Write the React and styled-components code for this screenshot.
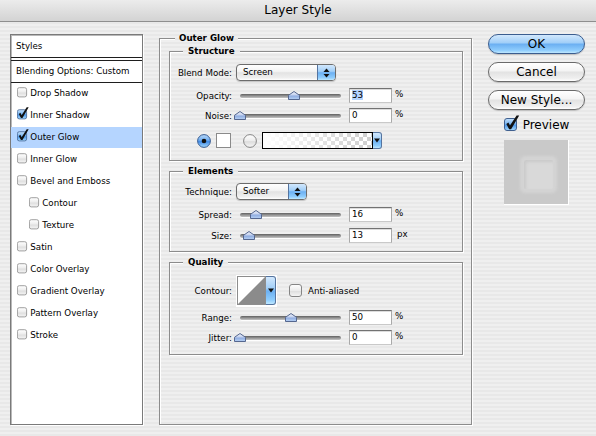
import React, { useId } from "react";
import styled, { createGlobalStyle } from "styled-components";

const FONT = `"DejaVu Sans", "Liberation Sans", sans-serif`;
const STRIPES = `repeating-linear-gradient(to bottom, #efefef 0px, #efefef 2px, #e8e8e8 2px, #e8e8e8 4px) fixed`;
const BLUE_GLOSS = `linear-gradient(#d2e8fd 0%, #a2cff8 42%, #6cb0f2 52%, #8fcdfd 85%, #bfe8ff 100%)`;
const WHITE_GLOSS = `linear-gradient(#ffffff 0%, #f4f4f4 42%, #e3e3e3 52%, #efefef 85%, #ffffff 100%)`;

const GlobalStyle = createGlobalStyle`
  * { box-sizing: border-box; }
  html, body { margin: 0; padding: 0; }
  body {
    background: ${STRIPES};
    font-family: ${FONT};
    font-size: 8.7px;
    color: #000;
  }
`;

const Window = styled.div`
  width: 596px;
  height: 436px;
  display: flex;
  flex-direction: column;
  overflow: hidden;
`;

const TitleBar = styled.div`
  height: 22px;
  flex: none;
  display: flex;
  align-items: center;
  justify-content: center;
  background: linear-gradient(#ececec, #d3d3d3);
  border-bottom: 1px solid #8e8e8e;
  font-size: 12px;
  padding-bottom: 1px;
`;

const Body = styled.div`
  flex: 1;
  display: flex;
  align-items: flex-start;
  padding: 10px 0 0 10px;
`;

/* ---------- left list ---------- */
const StyleList = styled.div`
  width: 133px;
  height: 391px;
  margin-top: 2px;
  flex: none;
  background: #fff;
  border: 1px solid #7a7a7a;
  box-shadow: inset 1px 1px 0 #b9b9b9, 1px 1px 0 #fff;
  display: flex;
  flex-direction: column;
`;

const ListHeader = styled.div`
  height: 22px;
  display: flex;
  align-items: center;
  padding-left: 5px;
`;

const DoubleRule = styled.div`
  height: 4px;
  flex: none;
  border-top: 1px solid #1e1e1e;
  border-bottom: 1px solid #1e1e1e;
`;

const BlendRow = styled.div`
  height: 22px;
  display: flex;
  align-items: center;
  padding: 0 0 1px 5px;
  border-bottom: 1px solid #1e1e1e;
`;

const ListItem = styled.div`
  height: 22px;
  flex: none;
  display: flex;
  align-items: center;
  gap: 1px;
  padding: 0 0 2px ${(p) => (p.$indent ? 18 : 6)}px;
  background: ${(p) =>
    p.$selected ? "linear-gradient(#b5d5ff 0 21px, transparent 21px)" : "transparent"};
`;

/* ---------- group boxes ---------- */
const Group = styled.fieldset`
  margin: ${(p) => p.$mt || 0}px 0 0 ${(p) => p.$ml || 0}px;
  min-width: 0;
  width: ${(p) => (p.$w ? `${p.$w}px` : "auto")};
  border: 1px solid #8c8c8c;
  box-shadow: 1px 1px 0 #fff, inset 1px 1px 0 #fff;
  padding: ${(p) => p.$pad};
  flex: none;
`;

const Legend = styled.legend`
  padding: 0 ${(p) => p.$px}px;
  margin-left: ${(p) => p.$ml}px;
  font-weight: bold;
  line-height: 13px;
  height: 13px;
  background: ${STRIPES};
`;

const Row = styled.div`
  display: flex;
  align-items: center;
  height: ${(p) => p.$h}px;
  margin-top: ${(p) => p.$mt}px;
  padding-left: ${(p) => p.$pl || 0}px;
`;

const Label = styled.div`
  width: 62px;
  flex: none;
  text-align: right;
  margin-right: 4px;
  white-space: nowrap;
`;

/* popup */
const Popup = styled.div`
  width: ${(p) => p.$w}px;
  height: 17px;
  flex: none;
  display: flex;
  border: 1px solid #6c6c6c;
  border-radius: 4px;
  overflow: hidden;
  background: ${WHITE_GLOSS};
  box-shadow: 0 1px 1px rgba(0, 0, 0, 0.18);
`;

const PopupText = styled.span`
  flex: 1;
  display: flex;
  align-items: center;
  padding: 0 0 1px 6px;
`;

const PopupArrows = styled.span`
  width: 18px;
  flex: none;
  display: flex;
  align-items: center;
  justify-content: center;
  border-left: 1px solid #55749f;
  background: ${BLUE_GLOSS};
`;

/* slider */
const SliderWrap = styled.div`
  position: relative;
  width: 101px;
  height: 15px;
  flex: none;
  display: flex;
  align-items: center;
  margin: 0 8px 0 4px;
`;

const Track = styled.div`
  width: 100%;
  height: 4px;
  border-radius: 2px;
  background: linear-gradient(#5f5f5f, #8e8e8e 45%, #c4c4c4);
  box-shadow: 0 1px 0 rgba(255, 255, 255, 0.9);
`;

const ThumbSvg = styled.svg`
  position: absolute;
  top: 3px;
  width: 12px;
  height: 9px;
  margin-left: -6px;
`;

/* text field */
const Field = styled.div`
  width: 43px;
  height: 15px;
  flex: none;
  display: flex;
  align-items: center;
  padding: 0 0 1px 2px;
  background: #fff;
  border: 1px solid;
  border-color: #727272 #a9a9a9 #c9c9c9 #a9a9a9;
  box-shadow: inset 0 1px 0 #dcdcdc;
`;

const Selected = styled.span`
  background: #b5d5ff;
`;

const Unit = styled.span`
  align-self: flex-start;
  margin: 1px 0 0 ${(p) => p.$ml}px;
`;

/* colour / gradient */
const ColorSwatch = styled.div`
  width: 15px;
  height: 15px;
  flex: none;
  margin: 0 12px 0 5px;
  background: #fff;
  border: 1px solid #8a8a8a;
`;

const GradientPick = styled.div`
  display: flex;
  height: 17px;
  margin-left: 5px;
`;

const GradientBar = styled.div`
  width: 111px;
  border: 1px solid #000;
  background: linear-gradient(to right, #fff 0%, rgba(255, 255, 255, 0) 100%),
    repeating-conic-gradient(#cdcdcd 0 25%, #ffffff 0 50%) 0 0 / 8px 8px;
`;

const DropTab = styled.div`
  width: ${(p) => p.$w}px;
  flex: none;
  display: flex;
  align-items: ${(p) => (p.$top ? "flex-start" : "center")};
  padding-top: ${(p) => (p.$top ? 11 : 0)}px;
  justify-content: center;
  border: 1px solid #55749f;
  border-left: none;
  border-radius: 0 3px 3px 0;
  background: ${BLUE_GLOSS};
`;

/* contour */
const ContourPick = styled.div`
  width: 41px;
  height: 32px;
  flex: none;
  display: flex;
  background: #fff;
  padding: 1px 1px 2px 1px;
  margin-right: 12px;
`;

const ContourGraph = styled.div`
  width: 29px;
  height: 29px;
  flex: none;
  border: 1px solid #8d8d8d;
  background: #fff;
`;

const CheckLabel = styled.label`
  display: flex;
  align-items: center;
  gap: ${(p) => p.$gap}px;
  font-size: ${(p) => p.$fs}px;
  margin-top: ${(p) => p.$mt || 0}px;
`;

/* right column */
const Side = styled.div`
  width: 97px;
  flex: none;
  margin: 2px 0 0 16px;
  display: flex;
  flex-direction: column;
  align-items: center;
`;

const AquaButton = styled.button`
  width: 97px;
  height: 20px;
  flex: none;
  margin-top: ${(p) => p.$mt}px;
  border-radius: 10px;
  border: 1px solid ${(p) => (p.$default ? "#3b5d8f" : "#6a6a6a")};
  background: ${(p) => (p.$default ? BLUE_GLOSS : WHITE_GLOSS)};
  box-shadow: 0 1px 1px rgba(0, 0, 0, 0.18);
  font: 12px ${FONT};
  color: #000;
  padding: 0 0 1px;
  line-height: 16px;
`;

const PreviewBox = styled.div`
  width: 65px;
  height: 65px;
  flex: none;
  margin-top: 8px;
  background: #c9c9c9;
  border-right: 1px solid #fff;
  border-bottom: 1px solid #fff;
  display: flex;
  align-items: center;
  justify-content: center;
  padding: 4px 0 0 4px;
`;

const PreviewShape = styled.div`
  width: 29px;
  height: 29px;
  background: #d9d9d9;
  border-radius: 2px;
  box-shadow: 0 0 3px 4px #d4d4d4, inset 2px 2px 3px rgba(150, 150, 150, 0.22);
`;

/* ---------- drawings ---------- */
function uid() {
  return useId().replace(/[^a-zA-Z0-9]/g, "");
}

function Checkbox({ size = 13, checked }) {
  const id = uid();
  const s = size / 13;
  return (
    <svg
      width={16 * s}
      height={17 * s}
      viewBox="0 0 16 17"
      style={{ marginTop: -4 * s, flex: "none", display: "block" }}
    >
      <defs>
        <linearGradient id={id} x1="0" y1="0" x2="0" y2="1">
          {checked ? (
            <>
              <stop offset="0" stopColor="#c5e1fc" />
              <stop offset="0.45" stopColor="#7ab5f0" />
              <stop offset="0.55" stopColor="#4d98ea" />
              <stop offset="1" stopColor="#a9dcff" />
            </>
          ) : (
            <>
              <stop offset="0" stopColor="#ffffff" />
              <stop offset="0.5" stopColor="#ececec" />
              <stop offset="0.55" stopColor="#dedede" />
              <stop offset="1" stopColor="#f6f6f6" />
            </>
          )}
        </linearGradient>
      </defs>
      <rect
        x="0.5"
        y="3.5"
        width="12"
        height="12"
        rx="2.5"
        fill={`url(#${id})`}
        stroke={checked ? "#40608f" : "#858585"}
      />
      {checked && (
        <polygon points="2.3,9 4.4,7.6 6,10.6 12.6,0.4 15.2,0.4 7.1,14.2 5.2,14.2" fill="#111" />
      )}
    </svg>
  );
}

function Radio({ on }) {
  const id = uid();
  return (
    <svg width="14" height="14" viewBox="0 0 14 14" style={{ flex: "none", display: "block" }}>
      <defs>
        <linearGradient id={id} x1="0" y1="0" x2="0" y2="1">
          {on ? (
            <>
              <stop offset="0" stopColor="#bcdcfb" />
              <stop offset="0.45" stopColor="#6aa9ee" />
              <stop offset="0.55" stopColor="#3f8ae6" />
              <stop offset="1" stopColor="#a6dbff" />
            </>
          ) : (
            <>
              <stop offset="0" stopColor="#ffffff" />
              <stop offset="0.5" stopColor="#ececec" />
              <stop offset="0.55" stopColor="#dcdcdc" />
              <stop offset="1" stopColor="#f8f8f8" />
            </>
          )}
        </linearGradient>
      </defs>
      <circle cx="7" cy="7" r="6.4" fill={`url(#${id})`} stroke={on ? "#3a5d92" : "#858585"} />
      {on && <circle cx="7" cy="7" r="2.3" fill="#111" />}
    </svg>
  );
}

function Thumb({ pct }) {
  const id = uid();
  return (
    <ThumbSvg viewBox="0 0 12 9" style={{ left: `${pct}%` }}>
      <defs>
        <linearGradient id={id} x1="0" y1="0" x2="0" y2="1">
          <stop offset="0" stopColor="#eef2fb" />
          <stop offset="0.45" stopColor="#c4d1ee" />
          <stop offset="0.55" stopColor="#8eabdf" />
          <stop offset="1" stopColor="#b9d3f6" />
        </linearGradient>
      </defs>
      <path d="M6 0.5 L11.5 4.3 V8.5 H0.5 V4.3 Z" fill={`url(#${id})`} stroke="#55678f" />
    </ThumbSvg>
  );
}

const UpDown = () => (
  <svg width="7" height="10" viewBox="0 0 7 10">
    <path d="M3.5 0.5 L6.5 4 H0.5 Z" fill="#111" />
    <path d="M0.5 6 H6.5 L3.5 9.5 Z" fill="#111" />
  </svg>
);

const Down = () => (
  <svg width="6" height="5" viewBox="0 0 6 5">
    <path d="M0 0.5 H6 L3 4.5 Z" fill="#111" />
  </svg>
);

/* ---------- composite parts ---------- */
function PopupButton({ w, children }) {
  return (
    <Popup $w={w}>
      <PopupText>{children}</PopupText>
      <PopupArrows>
        <UpDown />
      </PopupArrows>
    </Popup>
  );
}

function SliderRow({ label, pct, value, unit, mt, selected }) {
  return (
    <Row $h={15} $mt={mt}>
      <Label>{label}</Label>
      <SliderWrap>
        <Track />
        <Thumb pct={pct} />
      </SliderWrap>
      <Field>{selected ? <Selected>{value}</Selected> : value}</Field>
      <Unit $ml={unit === "px" ? 5 : 3}>{unit}</Unit>
    </Row>
  );
}

const effects = [
  { name: "Drop Shadow" },
  { name: "Inner Shadow", checked: true },
  { name: "Outer Glow", checked: true, selected: true },
  { name: "Inner Glow" },
  { name: "Bevel and Emboss" },
  { name: "Contour", indent: true },
  { name: "Texture", indent: true },
  { name: "Satin" },
  { name: "Color Overlay" },
  { name: "Gradient Overlay" },
  { name: "Pattern Overlay" },
  { name: "Stroke" },
];

export default function App() {
  return (
    <>
      <GlobalStyle />
      <Window>
        <TitleBar>Layer Style</TitleBar>
        <Body>
          <StyleList>
            <ListHeader>Styles</ListHeader>
            <DoubleRule />
            <BlendRow>Blending Options: Custom</BlendRow>
            {effects.map((e) => (
              <ListItem key={e.name} $indent={e.indent} $selected={e.selected}>
                <Checkbox size={10} checked={e.checked} />
                <span>{e.name}</span>
              </ListItem>
            ))}
          </StyleList>

          <Group $ml={16} $w={313} $pad="0 8px 69px 9px">
            <Legend $ml={6} $px={4}>Outer Glow</Legend>

            <Group $pad="0 0 11px 0">
              <Legend $ml={13} $px={5}>Structure</Legend>
              <Row $h={17} $mt={6}>
                <Label>Blend Mode:</Label>
                <PopupButton w={100}>Screen</PopupButton>
              </Row>
              <SliderRow label="Opacity:" pct={53} value="53" unit="%" mt={7} selected />
              <SliderRow label="Noise:" pct={0} value="0" unit="%" mt={5} />
              <Row $h={17} $mt={9} $pl={27}>
                <Radio on />
                <ColorSwatch />
                <Radio />
                <GradientPick>
                  <GradientBar />
                  <DropTab $w={9}>
                    <Down />
                  </DropTab>
                </GradientPick>
              </Row>
            </Group>

            <Group $mt={4} $pad="0 0 8px 0">
              <Legend $ml={13} $px={5}>Elements</Legend>
              <Row $h={17} $mt={5}>
                <Label>Technique:</Label>
                <PopupButton w={71}>Softer</PopupButton>
              </Row>
              <SliderRow label="Spread:" pct={16} value="16" unit="%" mt={7} />
              <SliderRow label="Size:" pct={9} value="13" unit="px" mt={6} />
            </Group>

            <Group $mt={4} $pad="0 0 9px 0">
              <Legend $ml={13} $px={5}>Quality</Legend>
              <Row $h={32} $mt={6}>
                <Label>Contour:</Label>
                <ContourPick>
                  <ContourGraph>
                    <svg width="27" height="27" viewBox="0 0 27 27" style={{ display: "block" }}>
                      <polygon points="0,27 27,0 27,27" fill="#8b8b8b" />
                    </svg>
                  </ContourGraph>
                  <DropTab $w={10} $top>
                    <Down />
                  </DropTab>
                </ContourPick>
                <CheckLabel $gap={3} $fs={8.7}>
                  <Checkbox size={13} />
                  <span>Anti-aliased</span>
                </CheckLabel>
              </Row>
              <SliderRow label="Range:" pct={50} value="50" unit="%" mt={3} />
              <SliderRow label="Jitter:" pct={0} value="0" unit="%" mt={5} />
            </Group>
          </Group>

          <Side>
            <AquaButton $default $mt={0}>OK</AquaButton>
            <AquaButton $mt={8}>Cancel</AquaButton>
            <AquaButton $mt={8}>New Style...</AquaButton>
            <CheckLabel $gap={3} $fs={12} $mt={8}>
              <Checkbox size={13} checked />
              <span>Preview</span>
            </CheckLabel>
            <PreviewBox>
              <PreviewShape />
            </PreviewBox>
          </Side>
        </Body>
      </Window>
    </>
  );
}
